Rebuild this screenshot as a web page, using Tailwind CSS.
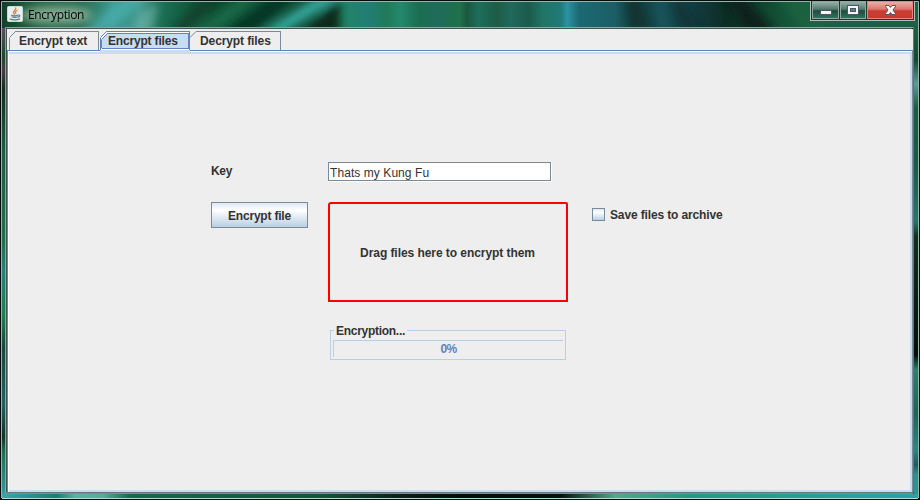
<!DOCTYPE html>
<html lang="en">
<head>
<meta charset="utf-8">
<title>Encryption</title>
<script src="https://cdn.jsdelivr.net/npm/@tailwindcss/browser@4"></script>
</head>
<body class="w-[920px] h-[500px] overflow-hidden bg-[#0c1513]">
<div class="relative w-[920px] h-[500px] flex flex-col font-['Liberation_Sans',Arial,sans-serif] text-[12px] leading-[14px] text-[#333333]">
  <!-- Glass frame -->
  <svg class="absolute inset-0" width="920" height="500" viewBox="0 0 920 500">
    <defs>
      <filter id="b" x="-20%" y="-50%" width="140%" height="200%"><feGaussianBlur stdDeviation="4"/></filter>
      <filter id="g" x="-20%" y="-60%" width="140%" height="220%"><feGaussianBlur stdDeviation="5"/></filter>
      <linearGradient id="top"><stop offset="0" stop-color="#123f2c"/><stop offset=".04" stop-color="#23633f"/><stop offset=".09" stop-color="#2b7055"/><stop offset=".12" stop-color="#3a9a8e"/><stop offset=".15" stop-color="#3a9586"/><stop offset=".17" stop-color="#1c7256"/><stop offset=".23" stop-color="#0e4a30"/><stop offset=".34" stop-color="#12543b"/><stop offset=".37" stop-color="#228567"/><stop offset=".4" stop-color="#217e74"/><stop offset=".42" stop-color="#207a5a"/><stop offset=".435" stop-color="#24886c"/><stop offset=".455" stop-color="#1c6e50"/><stop offset=".475" stop-color="#1e6c5a"/><stop offset=".5" stop-color="#1f704a"/><stop offset=".508" stop-color="#1a5840"/><stop offset=".52" stop-color="#1d6e5c"/><stop offset=".54" stop-color="#1d5d46"/><stop offset=".555" stop-color="#20695c"/><stop offset=".575" stop-color="#1c5b4c"/><stop offset=".59" stop-color="#207466"/><stop offset=".61" stop-color="#207a77"/><stop offset=".617" stop-color="#2b93a3"/><stop offset=".63" stop-color="#1c6973"/><stop offset=".67" stop-color="#1b5d65"/><stop offset=".69" stop-color="#133c38"/><stop offset=".72" stop-color="#18535a"/><stop offset=".76" stop-color="#123a3e"/><stop offset=".79" stop-color="#0c2e24"/><stop offset=".85" stop-color="#155237"/><stop offset=".89" stop-color="#1c6046"/><stop offset="1" stop-color="#196047"/></linearGradient>
      <linearGradient id="l" x2="0" y2="1"><stop offset="0" stop-color="#5b4e62"/><stop offset=".06" stop-color="#194b2a"/><stop offset=".09" stop-color="#4b3a47"/><stop offset=".13" stop-color="#122e20"/><stop offset=".26" stop-color="#1b6040"/><stop offset=".45" stop-color="#1d704a"/><stop offset=".52" stop-color="#25827b"/><stop offset=".61" stop-color="#1c8050"/><stop offset=".68" stop-color="#17473c"/><stop offset=".8" stop-color="#1e6460"/><stop offset=".87" stop-color="#133229"/><stop offset=".9" stop-color="#1c6d4f"/><stop offset="1" stop-color="#379ea1"/></linearGradient>
      <linearGradient id="r" x2="0" y2="1"><stop offset="0" stop-color="#1d6547"/><stop offset=".08" stop-color="#15492e"/><stop offset=".13" stop-color="#5d9b9b"/><stop offset=".18" stop-color="#1a5c40"/><stop offset=".3" stop-color="#1b5948"/><stop offset=".42" stop-color="#25766a"/><stop offset=".45" stop-color="#142e1c"/><stop offset=".7" stop-color="#070d09"/><stop offset=".73" stop-color="#2b816d"/><stop offset=".82" stop-color="#1d6454"/><stop offset=".9" stop-color="#268984"/><stop offset=".93" stop-color="#1b5b5a"/><stop offset=".95" stop-color="#2a9090"/><stop offset="1" stop-color="#2b9899"/></linearGradient>
      <linearGradient id="bt"><stop offset="0" stop-color="#3ca6ac"/><stop offset=".06" stop-color="#1e7b70"/><stop offset=".08" stop-color="#5fb0a4"/><stop offset=".11" stop-color="#5aaa9c"/><stop offset=".14" stop-color="#1c664c"/><stop offset=".35" stop-color="#165338"/><stop offset=".44" stop-color="#0d1c14"/><stop offset=".5" stop-color="#050b09"/><stop offset=".61" stop-color="#07110c"/><stop offset=".67" stop-color="#57a68b"/><stop offset=".75" stop-color="#289783"/><stop offset="1" stop-color="#2da2a3"/></linearGradient>
      <clipPath id="c"><path d="M2 2H918V28H2z"/></clipPath>
    </defs>
    <path fill="#060a0a" d="M0 0H920V500H0z"/>
    <path fill="url(#top)" d="M2 2H918V28H2z"/>
    <g clip-path="url(#c)">
      <g filter="url(#b)">
        <path fill="#4db0b4" d="M128 -5h25L105 33H80z" opacity=".7"/>
        <path fill="#9aced0" d="M140 12l20-10-8 30h-20z" opacity=".4"/>
        <path fill="#0b3b29" d="M167 32L205-5h18L188 32z" opacity=".7"/>
        <path fill="#1b7350" d="M190 32L242-5h20L218 32z" opacity=".7"/>
        <path fill="#062a1c" d="M225 33L275-4h22L250 33z" opacity=".7"/>
        <path fill="#36a79d" d="M260 33L320-4h22L282 33z"/>
        <path fill="#0b2b1e" d="M300 33L340-1V33z"/>
        <path fill="#0c302c" d="M625 0h14l14 30h-17zM670 0h12l18 30h-18z" opacity=".7"/>
        <path fill="#0b211d" d="M725-3h19l33 36h-32z"/>
        <path fill="#1b6540" d="M775-4h45l3 38h-16z" opacity=".7"/>
      </g>
      <ellipse cx="56" cy="15" rx="37" ry="8" fill="#b3cfbc" opacity=".7" filter="url(#g)"/>
    </g>
    <path fill="url(#l)" d="M2 28h3V498H2z"/>
    <path fill="url(#r)" d="M914 22h4V498h-4z"/>
    <path fill="url(#bt)" d="M2 494H918v4H2z"/>
    <g fill="none">
      <path stroke="#8fb9ab" d="M1.500 498V1.500H918.500V498"/>
      <path stroke="#b0ddcf" d="M2 498.500H918"/>
      <path stroke="#86aa9d" d="M5.500 493.500V27.500H913.500"/>
      <path stroke="#7e8f93" d="M5 493.500H913.500"/>
      <path stroke="#3f5450" d="M6.500 492V28.500H912"/>
      <path stroke="#66747c" d="M6 492.500H913.500V28"/>
    </g>
  </svg>

  <header class="relative h-[29px] shrink-0 flex items-start justify-between pl-[7px] pr-[5px]">
    <div class="flex items-start pt-[6px] gap-[5px]">
      <svg width="16" height="16" viewBox="0 0 16 16">
        <rect x=".5" y=".5" width="15" height="15" rx="1" fill="#ecefef" stroke="#cdd8dc"/>
        <g fill="none" stroke-linecap="round">
          <path d="M8.700 2c1 2-3 3-2.200 4.700.3.700.8 1 .8 1.600M10 4.500C8 5.500 8 6.500 8.800 7.300" stroke="#e77b32" stroke-width="1.300"/>
          <path d="M4.500 9.200c1.500.6 4.500.6 6 0M5 11c1.500.5 4 .5 5.500 0M3 13c2 1.200 7.500 1.200 9.500 0M11.500 9c2 .1 1.500 1.700-.2 2.200" stroke="#4e7896" stroke-width="1.200"/>
        </g>
      </svg>
      <h1 class="font-['Open_Sans','Noto_Sans',sans-serif] text-[12px] leading-[17px] tracking-[-0.4px] text-black">Encryption</h1>
    </div>
    <svg width="105" height="22" viewBox="0 0 105 22" shape-rendering="crispEdges">
      <defs>
        <linearGradient id="w" x2="0" y2="1"><stop offset="0" stop-color="#9bb3ab"/><stop offset=".45" stop-color="#537a6d"/><stop offset=".55" stop-color="#1f4c3d"/><stop offset="1" stop-color="#2b7860"/></linearGradient>
        <linearGradient id="x" x2="0" y2="1"><stop offset="0" stop-color="#eeb0aa"/><stop offset=".45" stop-color="#dd7770"/><stop offset=".55" stop-color="#c93e35"/><stop offset="1" stop-color="#cc382c"/></linearGradient>
      </defs>
      <path fill="#a9c1b8" d="M0 1h105v20H0z"/>
      <path fill="#1b3b30" d="M1 1h103v19H1z"/>
      <path fill="url(#w)" stroke="#8fa9a0" d="M2.500 1.500h26v17h-26zM30.500 1.500h25v17h-25z"/>
      <path fill="url(#x)" stroke="#e6847d" d="M57.500 1.500h45v17h-45z"/>
      <path fill="#f5f5f5" stroke="#4c5664" d="M10.500 10.500h11v4h-11z"/>
      <path fill="#f5f5f5" stroke="#4c5664" d="M37.500 5.500h11v9h-11z"/>
      <path fill="#51877b" stroke="#4c5664" d="M40.500 8.500h5v3h-5z"/>
      <path shape-rendering="auto" fill="#f6f6f6" stroke="#53515f" d="M75.500 5.500h3.500l1.500 2 1.500-2h3.500v1L83 10l2.500 3.500v1H82l-1.500-2-1.500 2h-3.500v-1L78 10 75.500 6.500z"/>
    </svg>
  </header>

  <main class="relative ml-[7px] w-[906px] h-[463px] bg-[#eeeeee] flex flex-col">
    <nav class="relative h-[21px] shrink-0 flex font-bold">
      <svg class="absolute left-0 top-0 z-10" width="280" height="25" viewBox="0 0 280 25" fill="none" shape-rendering="crispEdges">
        <path stroke="#7a8a99" d="M2.500 21V8.500M8 2.500h83.500V21"/>
        <path stroke="#7a8a99" shape-rendering="auto" d="M2.500 8.500l6-6"/>
        <path fill="#c8ddf2" d="M93 21h90v4H93z"/>
        <path fill="#fff" d="M93 8l6-6h83v19H93z"/>
        <path fill="#c8ddf2" d="M94 10l5-5h83v15H94z"/>
        <path stroke="#6382bf" d="M93.500 21V8.500M99 2.500h83.500V21M94.500 19.500h87M94.500 19V10.500M100 4.500h81.500V19"/>
        <path stroke="#6382bf" shape-rendering="auto" d="M93.500 8.500l6-6M94.500 10.500l6-6"/>
        <path stroke="#7a8a99" d="M189 2.500h84.500V21"/>
        <path stroke="#7a8a99" shape-rendering="auto" d="M183 8.500l6-6"/>
      </svg>
      <span class="relative z-20 w-[93px] pl-[12px] pt-[5px] tracking-[-0.1px] whitespace-nowrap">Encrypt text</span>
      <span class="relative z-20 w-[90px] pl-[8px] pt-[5px] tracking-[-0.18px] whitespace-nowrap">Encrypt files</span>
      <span class="relative z-20 w-[91px] pl-[10px] pt-[5px] tracking-[-0.1px] whitespace-nowrap">Decrypt files</span>
    </nav>
    <section class="flex-1 border-t border-l border-r border-t-[#6382bf] border-l-[#6382bf] border-r-[#7a8a99]">
      <div class="h-full border-t border-l border-white">
        <div class="h-full border-t-2 border-r-2 border-b-2 border-[#c8ddf2] pt-[108px] pl-[202px]">
          <div class="grid grid-cols-[117px_264px_auto] justify-start items-start font-bold">
            <label class="pt-[2px] h-[40px] tracking-[-0.3px]">Key</label>
            <div class="w-[224px] h-[20px] border-r border-b border-white"><div class="h-[19px] w-[223px] bg-white border border-[#7a8a99] pl-px pt-[3px] font-normal leading-[14px] tracking-[0.07px] whitespace-nowrap">Thats my Kung Fu</div></div>
            <span></span>
            <button class="w-[97px] h-[26px] border border-[#7a8a99] bg-linear-to-b from-[#dde8f3] via-white via-30% to-[#b8cfe5] flex justify-center pt-[6px] tracking-[-0.2px] whitespace-nowrap">Encrypt file</button>
            <div class="w-[240px] h-[100px] rounded-tl-[3px] rounded-tr-[2px] border-2 border-[#ff0000] flex justify-center pt-[42px] pr-px tracking-[-0.06px] whitespace-nowrap">Drag files here to encrypt them</div>
            <label class="flex pt-[6px] gap-[5px]"><i class="block w-[13px] h-[13px] border border-[#7a8a99] bg-linear-to-b from-[#dde8f3] via-white via-30% to-[#b8cfe5]"></i><span class="tracking-[-0.14px] whitespace-nowrap">Save files to archive</span></label>
          </div>
          <div class="ml-[119px] mt-[28px] w-[236px] h-[30px] border border-[#b8cfe5] relative pt-[9px] px-[2px] font-bold">
            <span class="absolute left-[3px] top-[-7px] bg-[#eeeeee] px-[2px] tracking-[-0.28px]">Encryption...</span>
            <div class="h-[17px] border-t border-l border-[#b8cfe5] text-center text-[#6382bf] leading-[17px] tracking-[-0.6px]">0%</div>
          </div>
        </div>
      </div>
    </section>
  </main>
</div>
</body>
</html>
